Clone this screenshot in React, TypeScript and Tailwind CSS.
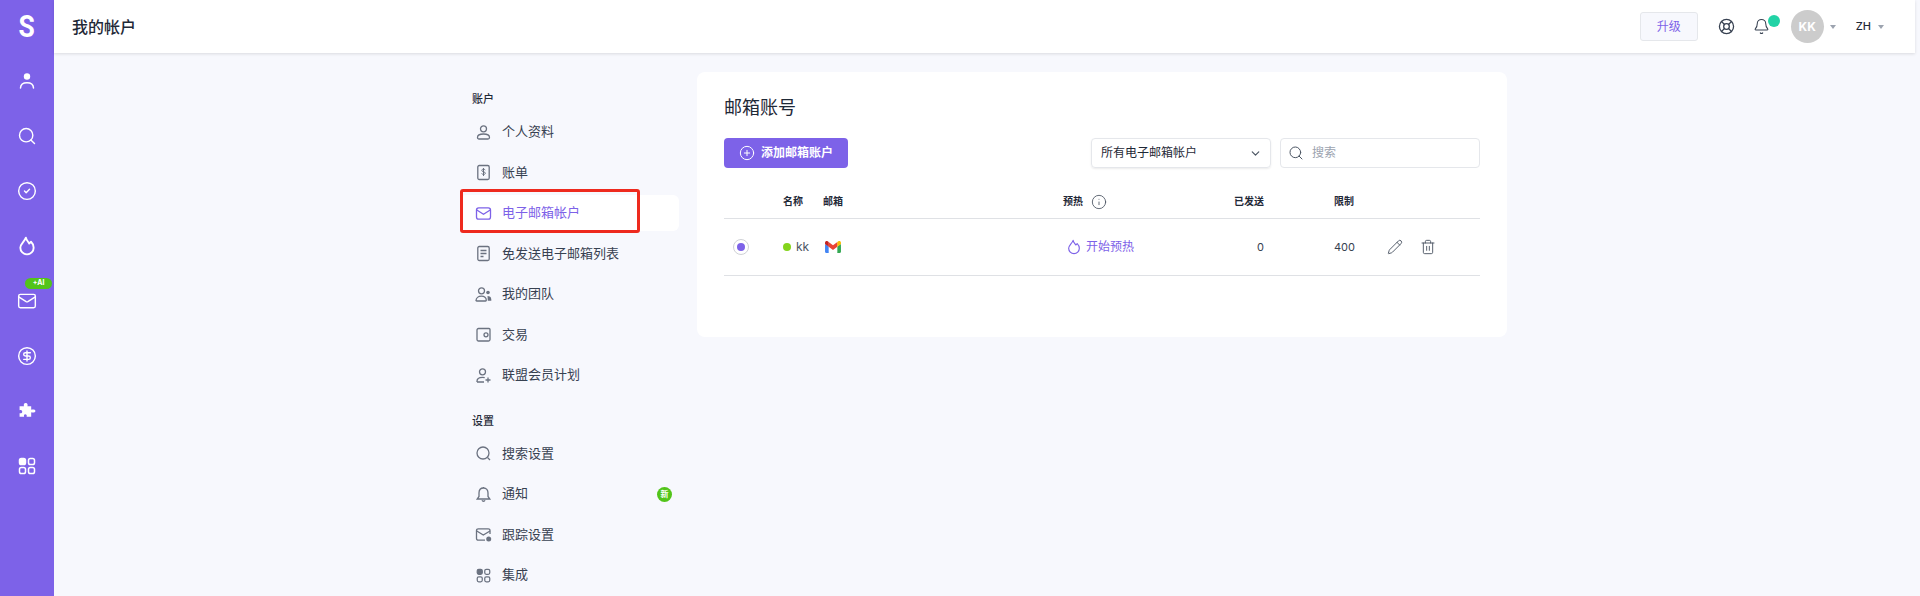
import React from "react";
import { Search, CircleCheck, Mail, CircleDollarSign, LifeBuoy, Bell, ChevronDown, Pencil, Trash2, Info, CirclePlus } from "lucide-react";

const font = "font-['Inter','Noto_Sans_CJK_SC',sans-serif]";

function UserSolid() {
  return (
    <svg width="20" height="20" viewBox="0 0 20 20" fill="none">
      <circle cx="10" cy="5.500" r="3.200" fill="#fff" />
      <path d="M3.500 17c.2-3.400 3-5.200 6.500-5.200s6.300 1.800 6.500 5.200" stroke="#fff" strokeWidth="1.500" strokeLinecap="round" />
    </svg>
  );
}
function FlameIcon({ size, strokeWidth = 1.500 }: { size: number; strokeWidth?: number }) {
  return (
    <svg width={size} height={size} viewBox="0 0 18 18" fill="none" stroke="currentColor" strokeWidth={strokeWidth} strokeLinejoin="round">
      <path d="M8 1.500C8.500 4 10 5 11 6.700l1.600-1.500C14.500 7 15 9 15 10.500a6 6 0 0 1-12 0C3 7 6.500 5.500 8 1.500Z" />
    </svg>
  );
}
function Puzzle() {
  return (
    <svg width="19" height="19" viewBox="0 0 18 18" fill="#fff">
      <path d="M1.500 5h4.200c-.5-1-.3-3 1.600-3s2.100 2 1.600 3h3.600v3.400c1-.5 4-.6 4 1.100s-3 1.600-4 1.100V15H8.200c.4-1.200-.1-2.400-1.300-2.400S5.400 13.800 5.800 15H1.500v-3.500c1.200.4 2.500-.1 2.500-1.400S2.700 8.300 1.500 8.700z" />
    </svg>
  );
}
function Apps({ color, size = 18 }: { color: string; size?: number }) {
  return (
    <svg width={size} height={size} viewBox="0 0 18 18" fill="none" stroke={color} strokeWidth="1.500">
      <rect x="1.500" y="1.500" width="6" height="6" rx="1.800" fill={color} />
      <rect x="10.500" y="1.500" width="6" height="6" rx="1.800" />
      <rect x="1.500" y="10.500" width="6" height="6" rx="1.800" />
      <rect x="10.500" y="10.500" width="6" height="6" rx="1.800" />
    </svg>
  );
}
function Gmail() {
  return (
    <svg width="16" height="12" viewBox="0 0 256 193">
      <path fill="#4285F4" d="M58.182 192.05V93.14L27.507 65.077 0 49.504v125.091c0 9.658 7.825 17.455 17.455 17.455h40.727Z" />
      <path fill="#34A853" d="M197.818 192.05h40.727c9.659 0 17.455-7.826 17.455-17.455V49.505l-31.156 17.837-27.026 25.798v98.91Z" />
      <path fill="#EA4335" d="m58.182 93.14-4.174-38.647 4.174-36.989L128 69.868l69.818-52.364 4.669 34.992-4.669 40.644L128 145.504z" />
      <path fill="#FBBC04" d="M197.818 17.504V93.14L256 49.504V26.231c0-21.585-24.64-33.89-41.89-20.945l-16.292 12.218Z" />
      <path fill="#C5221F" d="m0 49.504 26.759 20.07L58.182 93.14V17.504L41.89 5.286C24.61-7.66 0 4.646 0 26.23v23.273Z" />
    </svg>
  );
}
function Caret() {
  return <span className="w-0 h-0 border-l-[3.5px] border-r-[3.5px] border-t-[4px] border-l-transparent border-r-transparent border-t-[#9ca3af]" />;
}

const base = { width: 17, height: 17, viewBox: "0 0 17 17", fill: "none", stroke: "#6b7280", strokeWidth: 1.300 };

const navIcons = {
  user: (
    <svg {...base}>
      <circle cx="8.500" cy="4.800" r="3" />
      <path d="M2.500 13.500c0-2.300 2.500-3.500 6-3.500s6 1.200 6 3.500c0 1-.7 1.500-1.500 1.500H4c-.8 0-1.500-.5-1.500-1.500Z" />
    </svg>
  ),
  bill: (
    <svg {...base}>
      <rect x="2.800" y="1.500" width="11.400" height="14" rx="1.500" />
      <path d="M10.200 6.200c-.3-.8-1-1.100-1.700-1.100-.9 0-1.700.5-1.700 1.300 0 1.900 3.500.9 3.500 2.800 0 .9-.8 1.300-1.800 1.300-.8 0-1.500-.4-1.800-1.100M8.500 4v8" strokeWidth="1" />
    </svg>
  ),
  mail: (
    <svg {...base} stroke="#7d62e8">
      <rect x="1.500" y="2.800" width="14" height="11.400" rx="2.200" />
      <path d="M1.800 5l6.700 4.300L15.200 5" />
    </svg>
  ),
  doc: (
    <svg {...base}>
      <rect x="2.800" y="1.500" width="11.400" height="14" rx="1.500" />
      <path d="M5.500 5.500h6M5.500 8.500h6M5.500 11.500h3" />
    </svg>
  ),
  team: (
    <svg {...base}>
      <circle cx="6.500" cy="4.800" r="3" />
      <path d="M1 15c0-3.200 2.300-4.800 5.500-4.800 1.400 0 2.600.3 3.500 1 .9.700 1.300 1.800 1.300 3.100 0 .4-.3.700-.7.700H1.700c-.4 0-.7-.3-.7-.7Z" />
      <circle cx="13" cy="6.500" r="1.800" fill="#6b7280" stroke="none" />
      <path d="M12.500 10c2 0 3.800.8 3.800 3.500v1.300h-3.500" fill="#6b7280" stroke="none" />
    </svg>
  ),
  wallet: (
    <svg {...base}>
      <path d="M3.500 2.500h10.500a1 1 0 0 1 1 1v10a1.500 1.500 0 0 1-1.500 1.500h-10A1.500 1.500 0 0 1 2 13.500V4a1.500 1.500 0 0 1 1.500-1.500Z" />
      <circle cx="11" cy="8.800" r="2" />
    </svg>
  ),
  affiliate: (
    <svg {...base}>
      <circle cx="7.500" cy="4.800" r="3" />
      <path d="M2 15v-.7c0-2.500 2.300-4 5.500-4 .8 0 1.500.1 2.200.3M2 15h7" />
      <path d="M13 10.500v5M10.500 13h5" />
    </svg>
  ),
  search: (
    <svg {...base}>
      <circle cx="8" cy="8" r="6" />
      <path d="M12.500 12.500l2.500 2.500" />
    </svg>
  ),
  bell: (
    <svg {...base}>
      <path d="M8.500 2c-2.900 0-4.500 2.200-4.500 5v3.500L2.200 13h12.600L13 10.500V7c0-2.800-1.600-5-4.500-5Z" />
      <path d="M7 14.200a1.600 1.600 0 0 0 3 0M8.500 1v1" />
    </svg>
  ),
  mailDot: (
    <svg {...base}>
      <path d="M15 8V4.500A1.700 1.700 0 0 0 13.300 2.800H3.200A1.700 1.700 0 0 0 1.500 4.500v8a1.700 1.700 0 0 0 1.700 1.700H10" />
      <path d="M1.800 5l6.500 4L15 5" />
      <circle cx="13.700" cy="13" r="2.500" fill="#6b7280" stroke="none" />
    </svg>
  ),
};

const sideIcons = [
  <UserSolid />,
  <Search size={20} strokeWidth={1.700} />,
  <CircleCheck size={20} strokeWidth={1.700} />,
  <FlameIcon size={20} strokeWidth={1.700} />,
  <Mail size={20} strokeWidth={1.700} />,
  <CircleDollarSign size={20} strokeWidth={1.700} />,
  <Puzzle />,
  <Apps color="#fff" size={18} />,
];

function NavItem({ icon, label, active, badge }: { icon: React.ReactNode; label: string; active?: boolean; badge?: boolean }) {
  return (
    <div className={`h-[36px] mb-[4.500px] flex items-center pl-[15px] rounded-md ${active ? "bg-white text-[#7d62e8]" : "text-[#374151]"}`}>
      <span className="w-[17px] h-[17px] flex items-center justify-center mr-[10px]">{icon}</span>
      <span className="text-[13px] flex-1">{label}</span>
      {badge && (
        <span className="w-[15px] h-[15px] mr-[7px] rounded-full bg-[#52c41a] text-white text-[8px] font-bold flex items-center justify-center">新</span>
      )}
    </div>
  );
}

export default function App() {
  return (
    <div className={`flex h-[596px] w-[1920px] overflow-hidden bg-[#f7f8fd] ${font}`}>
      <aside className="w-[54px] shrink-0 bg-[#7d62e8] flex flex-col items-center text-white">
        <div className="h-[53px] flex items-center justify-center text-[31px] leading-none font-bold font-['Roboto',sans-serif] scale-x-[0.85]">S</div>
        {sideIcons.map((ic, i) => (
          <div key={i} className="relative h-[55px] w-full flex items-center justify-center">
            {i === 4 && (
              <span className="absolute left-[25px] top-[5px] h-[11px] w-[27px] rounded-full bg-[#52c41a] text-white text-[7px] font-bold flex items-center justify-center z-10">+AI</span>
            )}
            {ic}
          </div>
        ))}
      </aside>

      <div className="w-[1861px] shrink-0 flex flex-col">
        <header className="h-[53px] shrink-0 bg-white shadow-[0_1px_3px_rgba(0,0,0,0.12)] flex items-center pl-[18px] pr-[31px] relative z-10">
          <h1 className="text-[16px] font-medium text-[#1f2937] flex-1">我的帐户</h1>
          <button className="w-[58px] h-[29px] border border-[#e5e7eb] bg-[#f7f8fd] rounded-[3px] text-[12px] text-[#7d62e8] mr-[20px]">升级</button>
          <LifeBuoy size={17} strokeWidth={1.800} className="text-[#374151] mr-[18px]" />
          <span className="relative mr-[21px] flex">
            <Bell size={17} strokeWidth={1.500} className="text-[#374151]" />
            <span className="absolute left-[15px] top-[-3px] w-[12px] h-[12px] rounded-full bg-[#22d3a6]" />
          </span>
          <span className="w-[33px] h-[33px] rounded-full bg-[#cccccc] text-white text-[12px] font-bold flex items-center justify-center mr-[6px]">KK</span>
          <Caret />
          <span className="text-[11px] font-medium text-[#1f2937] ml-[20px] mr-[7px]">ZH</span>
          <Caret />
        </header>

        <main className="flex-1 flex justify-center pt-[19px] pr-[2px] overflow-hidden">
          <nav className="w-[219px] mr-[18px] relative">
            <div className="text-[11px] font-medium text-[#1f2937] pl-[12px] pt-[2px] h-[23px] mb-[1px] mt-[18px] leading-[14px]">账户</div>
            <NavItem icon={navIcons.user} label="个人资料" />
            <NavItem icon={navIcons.bill} label="账单" />
            <NavItem active icon={navIcons.mail} label="电子邮箱帐户" />
            <NavItem icon={navIcons.doc} label="免发送电子邮箱列表" />
            <NavItem icon={navIcons.team} label="我的团队" />
            <NavItem icon={navIcons.wallet} label="交易" />
            <NavItem icon={navIcons.affiliate} label="联盟会员计划" />
            <div className="text-[11px] font-medium text-[#1f2937] pl-[12px] pt-[16px] h-[38px] leading-[14px]">设置</div>
            <NavItem icon={navIcons.search} label="搜索设置" />
            <NavItem badge icon={navIcons.bell} label="通知" />
            <NavItem icon={navIcons.mailDot} label="跟踪设置" />
            <NavItem icon={<Apps color="#6b7280" size={15} />} label="集成" />
            <div className="absolute left-0 top-[117px] w-[180px] h-[44px] rounded-[3px] border-[3px] border-[#ee2a1e]" />
          </nav>

          <section className="w-[810px] h-[265px] bg-white rounded-lg pl-[27px] pr-[27px]">
            <h2 className="text-[18px] font-normal text-[#1f2937] h-[66px] pt-[23px] leading-[26px]">邮箱账号</h2>
            <div className="flex items-center h-[30px]">
              <button className="w-[124px] h-[30px] rounded-[4px] bg-[#7d62e8] text-white text-[12px] font-bold flex items-center pl-[15px] gap-[6px]">
                <CirclePlus size={16} strokeWidth={1.500} />
                添加邮箱账户
              </button>
              <div className="ml-auto w-[180px] h-[30px] border border-[#e5e7eb] rounded-[4px] shadow-[0_1px_2px_rgba(0,0,0,0.08)] flex items-center pl-[9px] pr-[8px] text-[12px] text-[#1f2937]">
                <span className="flex-1">所有电子邮箱帐户</span>
                <ChevronDown size={13} strokeWidth={2.200} className="text-[#4b5563]" />
              </div>
              <div className="ml-[9px] w-[200px] h-[30px] border border-[#e5e7eb] rounded-[4px] flex items-center pl-[7px] gap-[8px] text-[12px] text-[#9ca3af]">
                <Search size={16} strokeWidth={1.500} className="text-[#4b5563]" />
                搜索
              </div>
            </div>

            <div className="grid grid-cols-[59px_40px_240px_140px_61px_70px_55px_1fr] items-center h-[51px] border-b border-[#dfe1e5] text-[10px] font-bold text-[#1f2937] pt-[17px]">
              <span />
              <span>名称</span>
              <span>邮箱</span>
              <span className="flex items-center gap-[8px]">预热<Info size={16} strokeWidth={1.300} className="text-[#4b5563]" /></span>
              <span className="text-right">已发送</span>
              <span />
              <span>限制</span>
              <span />
            </div>
            <div className="grid grid-cols-[59px_40px_240px_140px_61px_70px_53px_1fr] items-center h-[57px] border-b border-[#dfe1e5] text-[11px] text-[#374151]">
              <span className="pl-[9px]">
                <span className="w-[16px] h-[16px] rounded-full border border-[#cfd1d6] flex items-center justify-center">
                  <span className="w-[8px] h-[8px] rounded-full bg-[#7d62e8]" />
                </span>
              </span>
              <span className="flex items-center gap-[5px] text-[12px] text-[#4b5563]">
                <span className="w-[8px] h-[8px] rounded-full bg-[#84d41c]" />kk
              </span>
              <span className="pl-[2px]"><Gmail /></span>
              <span className="flex items-center text-[#7d62e8] text-[12px] pl-[3px] gap-[4px]">
                <FlameIcon size={16} strokeWidth={1.300} />开始预热
              </span>
              <span className="text-right">0</span>
              <span />
              <span>400</span>
              <span className="flex items-center gap-[17px] text-[#4b5563]">
                <Pencil size={16} strokeWidth={1.400} />
                <Trash2 size={16} strokeWidth={1.400} />
              </span>
            </div>
          </section>
        </main>
      </div>
    </div>
  );
}
